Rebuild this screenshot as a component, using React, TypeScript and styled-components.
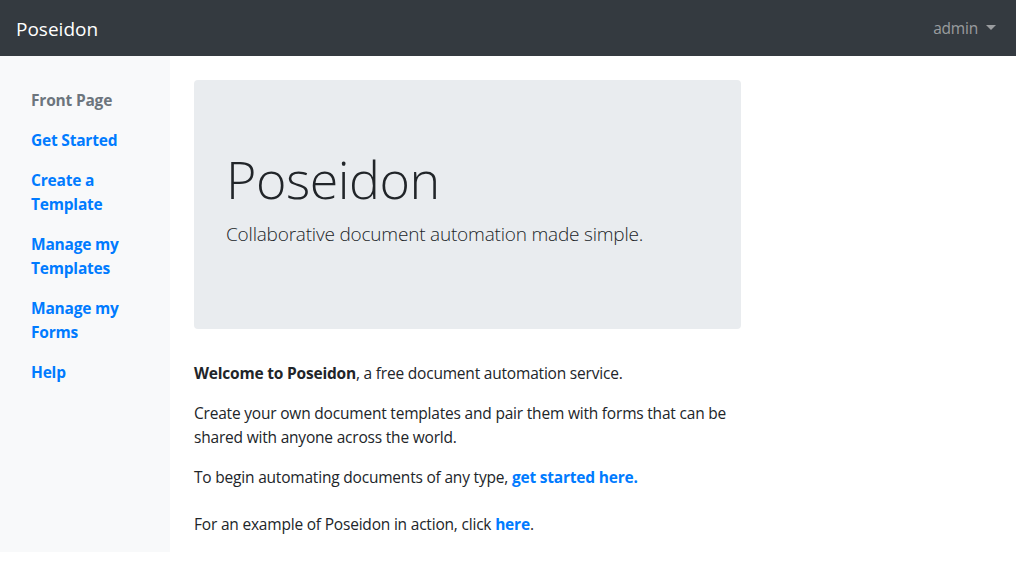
import React from 'react';
import styled, { createGlobalStyle } from 'styled-components';

const GlobalStyle = createGlobalStyle`
  * { box-sizing: border-box; }
  body {
    margin: 0;
    font-family: "Open Sans", "Noto Sans", sans-serif;
    font-size: 15.5px;
    letter-spacing: -0.2px;
    line-height: 24px;
    color: #212529;
    background: #fff;
  }
`;

const Navbar = styled.nav`
  display: flex;
  align-items: center;
  justify-content: space-between;
  height: 56px;
  padding: 8px 16px;
  background: #343a40;
`;

const Brand = styled.a`
  font-size: 19px;
  line-height: 30px;
  padding: 6px 0 4px;
  letter-spacing: 0;
  color: #fff;
  text-decoration: none;
`;

const UserMenu = styled.a`
  display: flex;
  align-items: center;
  padding: 8px 4px 8px 8px;
  color: rgba(255, 255, 255, 0.5);
  text-decoration: none;

  &::after {
    content: '';
    display: inline-block;
    margin-left: 8px;
    margin-top: -2px;
    border-top: 5px solid;
    border-left: 5px solid transparent;
    border-right: 5px solid transparent;
  }
`;

const Layout = styled.div`
  display: flex;
  align-items: stretch;
`;

const Sidebar = styled.aside`
  flex: 0 0 170px;
  width: 170px;
  padding: 24px 15px 0;
  background: #f8f9fa;
`;

const NavList = styled.ul`
  list-style: none;
  margin: 0;
  padding: 0;
  display: flex;
  flex-direction: column;
`;

const NavLink = styled.a<{ $active?: boolean }>`
  display: block;
  padding: 8px 16px;
  font-weight: 700;
  line-height: 24px;
  color: ${(p) => (p.$active ? '#6c757d' : '#007bff')};
  text-decoration: none;
`;

const Main = styled.main`
  flex: 1;
  padding: 24px 24px 0;
`;

const Content = styled.div`
  max-width: 547px;
`;

const Jumbotron = styled.section`
  padding: 64px 32px;
  margin-bottom: 32px;
  background: #e9ecef;
  border-radius: 4px;
`;

const Display = styled.h1`
  margin: 0 0 8px;
  height: 67px;
  font-size: 52px;
  font-weight: 300;
  letter-spacing: -0.5px;
  line-height: 70px;
`;

const Lead = styled.p`
  margin: 0 0 16px;
  font-size: 19px;
  font-weight: 300;
  letter-spacing: -0.2px;
  line-height: 30px;
`;

const Para = styled.p<{ $gap?: number }>`
  margin: 0 0 ${(p) => p.$gap ?? 16}px;
`;

const TextLink = styled.a`
  font-weight: 700;
  color: #007bff;
  text-decoration: none;
`;

const links = [
  { label: 'Front Page', active: true },
  { label: 'Get Started' },
  { label: 'Create a Template' },
  { label: 'Manage my Templates' },
  { label: 'Manage my Forms' },
  { label: 'Help' },
];

export default function App() {
  return (
    <>
      <GlobalStyle />
      <Navbar>
        <Brand href="#">Poseidon</Brand>
        <UserMenu href="#">admin</UserMenu>
      </Navbar>
      <Layout>
        <Sidebar>
          <NavList>
            {links.map((l) => (
              <li key={l.label}>
                <NavLink href="#" $active={l.active}>
                  {l.label}
                </NavLink>
              </li>
            ))}
          </NavList>
        </Sidebar>
        <Main>
          <Content>
            <Jumbotron>
              <Display>Poseidon</Display>
              <Lead>Collaborative document automation made simple.</Lead>
            </Jumbotron>
            <Para>
              <strong>Welcome to Poseidon</strong>, a free document automation service.
            </Para>
            <Para>
              Create your own document templates and pair them with forms that can be shared with
              anyone across the world.
            </Para>
            <Para $gap={23}>
              To begin automating documents of any type, <TextLink href="#">get started here.</TextLink>
            </Para>
            <Para>
              For an example of Poseidon in action, click <TextLink href="#">here</TextLink>.
            </Para>
          </Content>
        </Main>
      </Layout>
    </>
  );
}
